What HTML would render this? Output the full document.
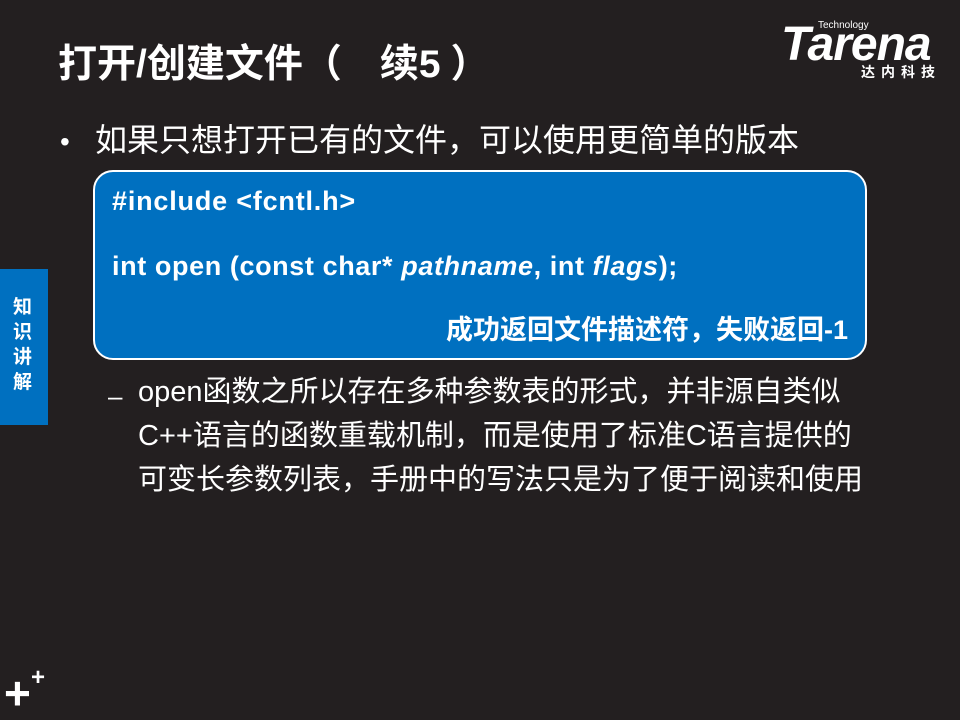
<!DOCTYPE html>
<html><head><meta charset="utf-8"><style>
body{margin:0;width:960px;height:720px;background:#231f20;position:relative;overflow:hidden;font-family:"Liberation Sans","Noto Sans CJK SC",sans-serif;color:#fff}
.a{position:absolute;white-space:nowrap}
.s{display:inline-block}
</style></head><body>
<div class="a" style="left:58px;top:40px;font-size:39px;font-weight:bold;line-height:50px">打开/创建文件（<span class="s" style="width:38px"></span>续5<span class="s" style="width:10px"></span>）</div>
<div class="a" style="left:818px;top:20px;font-size:10px">Technology</div>
<div class="a" style="left:781px;top:18px;font-size:48px;font-weight:bold;font-style:italic;letter-spacing:-1px;line-height:54px">Tarena</div>
<div class="a" style="left:861px;top:62px;font-size:14px;font-weight:bold;letter-spacing:6px">达内科技</div>
<div style="position:absolute;left:0;top:269px;width:48px;height:156px;background:#0070c0"></div>
<div class="a" style="left:13px;top:295px;font-size:19px;font-weight:bold;line-height:25px;white-space:normal;width:22px">知识讲解</div>
<div class="a" style="left:60px;top:122px;font-size:28px;line-height:40px">•</div>
<div class="a" style="left:95px;top:119px;font-size:32px;line-height:42px">如果只想打开已有的文件，可以使用更简单的版本</div>
<div style="position:absolute;left:93px;top:170px;width:770px;height:186px;background:#0070c0;border:2px solid #fff;border-radius:20px"></div>
<div class="a" style="left:112px;top:184px;font-size:27px;font-weight:bold;line-height:34px;letter-spacing:0.8px">#include &lt;fcntl.h&gt;</div>
<div class="a" style="left:112px;top:249px;font-size:27px;font-weight:bold;line-height:34px;letter-spacing:0.6px">int open (const char* <i>pathname</i>, int <i>flags</i>);</div>
<div class="a" style="left:446px;top:313px;font-size:27px;font-weight:bold;line-height:34px">成功返回文件描述符，失败返回-1</div>
<div class="a" style="left:108px;top:376px;font-size:26px;line-height:40px">–</div>
<div class="a" style="left:138px;top:370px;font-size:29px;line-height:44px">open函数之所以存在多种参数表的形式，并非源自类似<br>C++语言的函数重载机制，而是使用了标准C语言提供的<br>可变长参数列表，手册中的写法只是为了便于阅读和使用</div>
<div class="a" style="left:4px;top:668px;font-size:46px;font-weight:bold;line-height:50px">+</div>
<div class="a" style="left:31px;top:665px;font-size:24px;font-weight:bold;line-height:26px">+</div>
</body></html>
